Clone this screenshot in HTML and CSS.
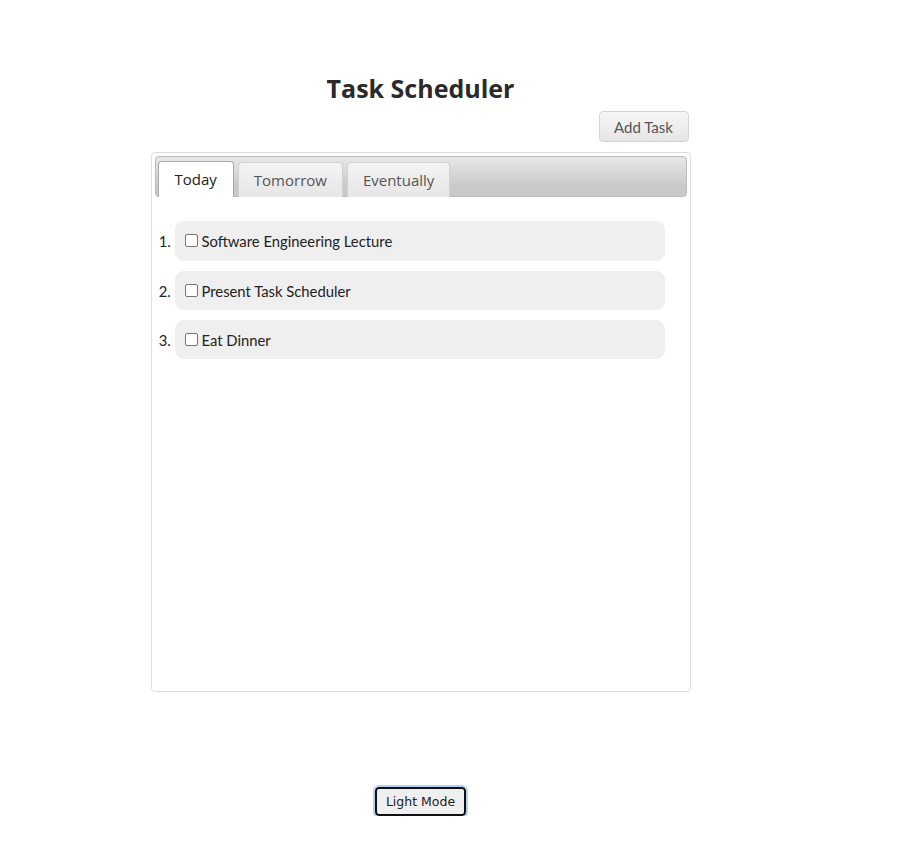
FILE: index.html
```html
<!DOCTYPE html>
<html>
<head>
<meta charset="utf-8">
<link rel="stylesheet" href="styles.css">
</head>
<body>
<div class="wrap">
  <h1 class="title">Task Scheduler</h1>
  <div class="toolbar">
    <button class="add-btn">Add Task</button>
  </div>
  <div class="tabs">
    <ul class="tab-nav">
      <li class="tab active">Today</li>
      <li class="tab">Tomorrow</li>
      <li class="tab">Eventually</li>
    </ul>
    <div class="panel">
      <ol class="tasks">
        <li><div class="task"><span class="cb"></span>Software Engineering Lecture</div></li>
        <li><div class="task"><span class="cb"></span>Present Task Scheduler</div></li>
        <li><div class="task"><span class="cb"></span>Eat Dinner</div></li>
      </ol>
    </div>
  </div>
  <div class="footer">
    <button class="mode-btn">Light Mode</button>
  </div>
</div>
</body>
</html>
```
FILE: styles.css
```css
html, body { margin: 0; padding: 0; background: #fff; }
.wrap {
  width: 841px;
  display: flex;
  flex-direction: column;
  align-items: center;
}
.title {
  margin: 71px 0 0 0;
  font-family: "Open Sans", sans-serif;
  font-weight: 700;
  font-size: 25px;
  line-height: 34px;
  color: #2a2a2a;
}
.toolbar {
  width: 540px;
  display: flex;
  justify-content: flex-end;
  margin-top: 6px;
}
.add-btn {
  margin-right: 2px;
  width: 90px;
  height: 31px;
  border: 1px solid #d3d3d3;
  border-radius: 4px;
  background: linear-gradient(#f6f6f6, #e6e6e6);
  color: #555;
  font-family: Lato, sans-serif;
  font-size: 15px;
  padding: 0;
}
.tabs {
  margin-top: 10px;
  width: 540px;
  height: 540px;
  box-sizing: border-box;
  border: 1px solid #dddddd;
  border-radius: 4px;
  padding: 3px;
  display: flex;
  flex-direction: column;
}
.tab-nav {
  list-style: none;
  margin: 0;
  padding: 4px 0 0 2px;
  height: 41px;
  box-sizing: border-box;
  border: 1px solid #bbbbbb;
  border-radius: 4px;
  background: linear-gradient(#e8e8e8, #cbcbcb 70%, #c8c8c8);
  display: flex;
  gap: 4px;
  align-items: flex-end;
}
.tab {
  height: 35px;
  box-sizing: border-box;
  padding: 0 15px;
  border: 1px solid #d0d0d0;
  border-bottom: none;
  border-radius: 4px 4px 0 0;
  background: linear-gradient(#f4f4f4, #e6e6e6);
  color: #555;
  font-family: "Open Sans", sans-serif;
  font-size: 15px;
  line-height: 35px;
  margin-bottom: -1px;
}
.tab.active {
  background: #fff;
  color: #212121;
  border-color: #aaa;
  height: 36px;
  padding: 0 16px;
}
.panel {
  flex: 1;
  padding: 24px 21px 0 0;
}
.tasks {
  margin: 0;
  padding-left: 20px;
  font-family: Lato, sans-serif;
  font-size: 14.8px;
  color: #222;
}
.tasks li { margin-bottom: 10px; padding-left: 0; }
.tasks li::marker { color: #222; }
.task {
  background: #efefef;
  border-radius: 9px;
  height: 40px;
  display: flex;
  align-items: center;
  padding-left: 10px;
  width: 490px;
  box-sizing: border-box;
}
.tasks li:nth-child(2) .task, .tasks li:nth-child(3) .task { height: 39px; }
.cb {
  width: 11px;
  height: 11px;
  border: 1px solid #767676;
  border-radius: 2px;
  background: #fff;
  margin-right: 4px;
  margin-top: -1px;
}
.footer {
  margin-top: 95px;
}
.mode-btn {
  width: 91px;
  height: 29px;
  border: 2px solid #101010;
  border-radius: 4px;
  background: #efefef;
  outline: 2px solid #b4d0f4;
  outline-offset: 0;
  font-family: "DejaVu Sans", sans-serif;
  font-size: 12.5px;
  color: #222;
  padding: 0;
}
```
